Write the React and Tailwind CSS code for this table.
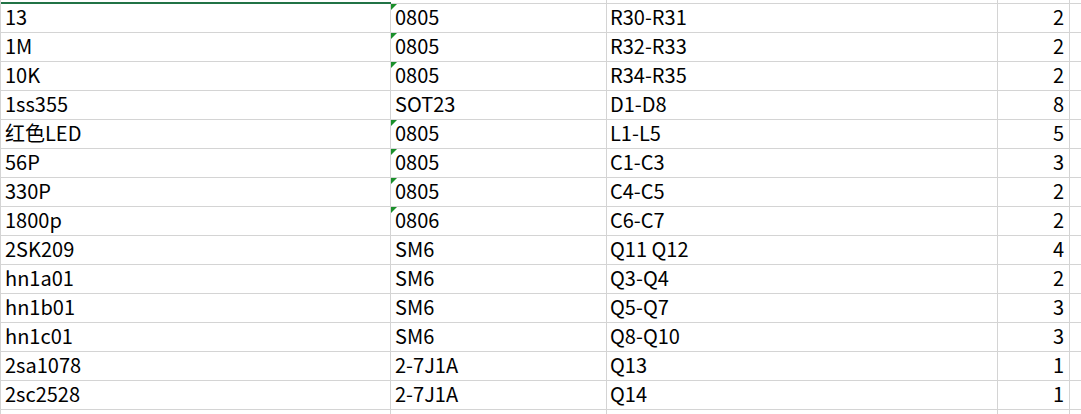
import React from 'react';

const rows = [
  ['13', '0805', 'R30-R31', '2', true],
  ['1M', '0805', 'R32-R33', '2', true],
  ['10K', '0805', 'R34-R35', '2', true],
  ['1ss355', 'SOT23', 'D1-D8', '8', false],
  ['红色LED', '0805', 'L1-L5', '5', true],
  ['56P', '0805', 'C1-C3', '3', true],
  ['330P', '0805', 'C4-C5', '2', true],
  ['1800p', '0806', 'C6-C7', '2', true],
  ['2SK209', 'SM6', 'Q11 Q12', '4', false],
  ['hn1a01', 'SM6', 'Q3-Q4', '2', false],
  ['hn1b01', 'SM6', 'Q5-Q7', '3', false],
  ['hn1c01', 'SM6', 'Q8-Q10', '3', false],
  ['2sa1078', '2-7J1A', 'Q13', '1', false],
  ['2sc2528', '2-7J1A', 'Q14', '1', false],
];

const cols = 'grid grid-cols-[391px_216px_391px_72px_1fr]';
const cell = 'h-[29px] border-b border-[#d4d4d4] flex items-end pb-[3px] leading-[24px] whitespace-nowrap';

function Flag() {
  return (
    <svg className="absolute left-0 top-0" width="6" height="6" viewBox="0 0 6 6">
      <polygon points="0,0 6,0 0,6" fill="#1a8f2a" />
    </svg>
  );
}

export default function App() {
  return (
    <div
      className="w-[1081px] h-[414px] overflow-hidden bg-white text-black text-[20px]"
      style={{ fontFamily: '"Noto Sans CJK SC", sans-serif' }}
    >
      {/* top edge: selected cell border above */}
      <div className={cols}>
        <div className="h-[4px] border-l border-[#d4d4d4] flex flex-col justify-end">
          <div className="h-[2px] bg-[#217346]" />
        </div>
        <div className="h-[4px] border-r border-b border-[#d4d4d4]" />
        <div className="h-[4px] border-r border-b border-[#d4d4d4]" />
        <div className="h-[4px] border-r border-b border-[#d4d4d4]" />
        <div className="h-[4px] border-b border-[#d4d4d4]" />
      </div>
      {rows.map(([a, b, c, d, flag], i) => (
        <div key={i} className={cols}>
          <div className={`${cell} border-l border-r pl-[4px]`}>{a}</div>
          <div className={`${cell} border-r relative pl-[4px]`}>
            {flag && <Flag />}
            {b}
          </div>
          <div className={`${cell} border-r pl-[3px]`}>{c}</div>
          <div className={`${cell} border-r justify-end pr-[5px]`}>{d}</div>
          <div className={cell}></div>
        </div>
      ))}
      <div className={cols}>
        <div className="h-[10px] border-l border-r border-[#d4d4d4]" />
        <div className="h-[10px] border-r border-[#d4d4d4]" />
        <div className="h-[10px] border-r border-[#d4d4d4]" />
        <div className="h-[10px] border-r border-[#d4d4d4]" />
        <div className="h-[10px]" />
      </div>
    </div>
  );
}
